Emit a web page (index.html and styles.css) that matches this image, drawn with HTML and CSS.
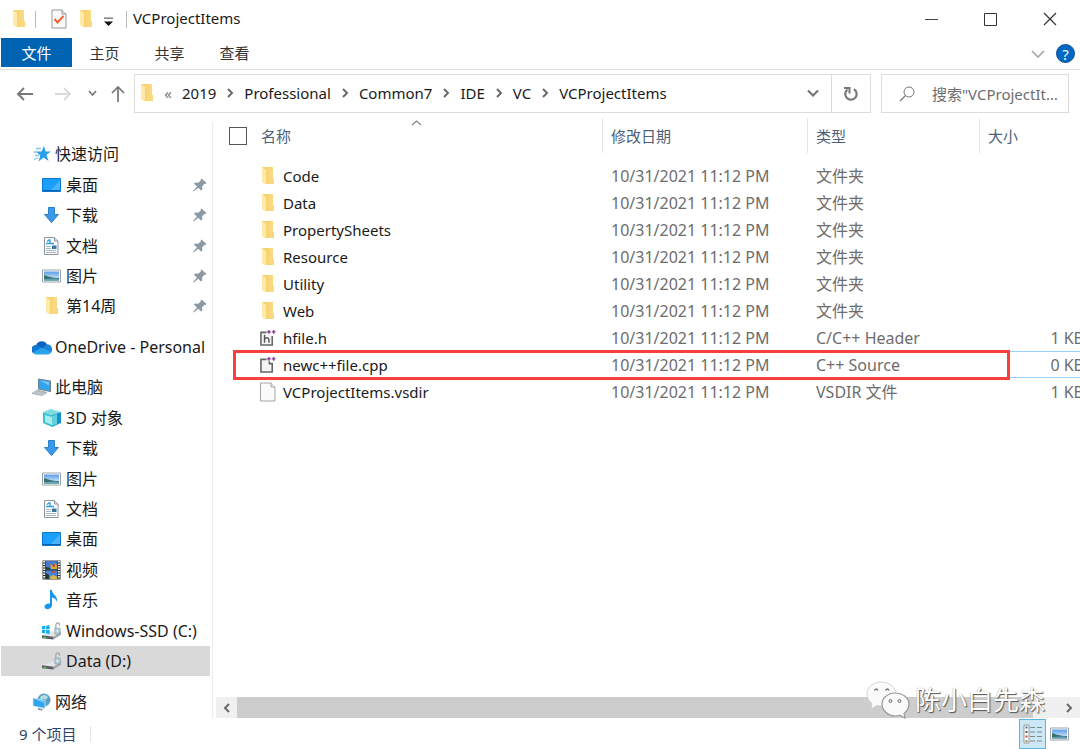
FILE: index.html
```html
<!DOCTYPE html>
<html lang="zh-CN">
<head>
<meta charset="utf-8">
<title>VCProjectItems</title>
<link rel="stylesheet" href="styles.css">
</head>
<body>
<svg class="defs" aria-hidden="true">
  <defs>
    <linearGradient id="gFolder" x1="0" x2="1"><stop offset="0" stop-color="#f3cd6b"/><stop offset="1" stop-color="#fbdc85"/></linearGradient>
    <linearGradient id="gSky" x1="0" y1="0" x2="0" y2="1"><stop offset="0" stop-color="#5b9ee8"/><stop offset="1" stop-color="#e4f3fc"/></linearGradient>
  </defs>
  <symbol id="folder" viewBox="0 0 14 20">
    <path d="M1 1h11v11h1v6H4z" fill="url(#gFolder)"/>
    <path d="M12 12h1v6H5l6-1z" fill="#f9d97f"/>
    <path d="M1 1l4 3v15l-4-3z" fill="#ffe9a6"/>
  </symbol>
  <symbol id="star" viewBox="0 0 20 18">
    <path d="M12 1l1.600 5.400h5.400l-4.500 3.400 2 6.200-5-3.500-5 4 1.800-6-4.300-4.100h5.500z" fill="#2b9fe8"/>
    <path d="M4 3.500h5M1.500 7h4M3 10.500h4M2 14.500l4-1.500" stroke="#7cc8f5" stroke-width="1.300"/>
  </symbol>
  <symbol id="desktop" viewBox="0 0 20 18">
    <path d="M.5 2.500h18v13H.5z" fill="#1a9fff" stroke="#0b78d0"/>
    <path d="M9 14L18 4v10z" fill="#48b3ff"/><path d="M1 14.500h17" stroke="#0860a8"/>
  </symbol>
  <symbol id="down" viewBox="0 0 20 18">
    <path d="M6.500 1.500h6v7h4L9.500 16.500 2.500 8.500h4z" fill="#3b97e8" stroke="#2b80cc"/>
  </symbol>
  <symbol id="doc" viewBox="0 0 20 18">
    <path d="M2.500.5h10l3.500 3.500v13.500H2.500z" fill="#fdfdfd" stroke="#8e9499"/>
    <path d="M12.500.5v3.500H16" fill="#ddd" stroke="#8e9499"/>
    <path d="M4 6.500h8M5 4.500L7 3h1v3" stroke="#2b9be0" stroke-width="1.300" fill="none"/>
    <path d="M4 9.500h5M4 11.500h5M4 13.500h10M4 15.500h10" stroke="#a5b7c5"/>
    <path d="M10 8.500h4.500v3.500H10z" fill="#39759c"/>
  </symbol>
  <symbol id="picture" viewBox="0 0 20 18">
    <path d="M.5 3h18v12H.5z" fill="#fff" stroke="#9aa3a9"/>
    <path d="M2 4.500h15v9H2z" fill="url(#gSky)"/>
    <path d="M2 8c4 1 7 3 15 3v2.500H2z" fill="#3b716b"/><path d="M2 12c6 0 10-1 15 0v1.500H2z" fill="#5f9fb8"/>
  </symbol>
  <symbol id="cloud" viewBox="1 0 20 15">
    <path d="M5 6a6 6 0 0 1 11-1l-4 9H4a4 4 0 0 1 1-8z" fill="#0f63bb"/>
    <path d="M15 5a5 5 0 0 1 6 6c0 2-2 3-4 3H9z" fill="#1a86dc"/>
    <path d="M2 12l9-4 9 5c-1 1.500-2 2-4 2H5c-2 0-3-1.500-3-3z" fill="#29a4ec"/>
    <path d="M4.500 5.500C1 6 0 10 2 13l9-5z" fill="#1279d0"/>
  </symbol>
  <symbol id="pc" viewBox="0 0 20 18">
    <path d="M6.500 1l12 2v10.500l-12-2.500z" fill="#31a4f0" stroke="#6f7f8b"/>
    <path d="M8 2.500l9 5V4z" fill="#75c8fb"/>
    <path d="M5 12l10 2.500-5 3-10-2z" fill="#d5d9dc" stroke="#8e979d" stroke-width=".7"/>
    <path d="M3 14.500l8 1.500M5 13.200l8 1.700" stroke="#a3abb0" stroke-width=".8"/>
  </symbol>
  <symbol id="cube" viewBox="0 0 20 18">
    <path d="M1 3l9 3v12l-9-4z" fill="#3bc3cf"/><path d="M3 6l7 2v8l-7-3z" fill="#a5ecec"/>
    <path d="M1 3l8-3 10 3-9 3z" fill="#7edde3"/>
    <path d="M10 6l9-3v11l-9 4z" fill="#1195c9"/><path d="M10 7l5-2v10l-5 2z" fill="#64d0df"/>
  </symbol>
  <symbol id="video" viewBox="0 0 20 20">
    <path d="M.5.5h18v19H.5z" fill="#303030"/>
    <path d="M4 1h11v8.500H4z" fill="#4179d5"/><path d="M4 10.500h11V19H4z" fill="#4882db"/>
    <path d="M2.200 1v18M16.800 1v18" stroke="#f4f4f4" stroke-width="2" stroke-dasharray="1.500 1"/>
    <path d="M8 3l2 3 2-3 3 2v4H9z" fill="#d9aa30"/><path d="M11 4h2v3h-2z" fill="#d73f34"/>
    <path d="M4 7l4 1v1.500H4zM4 13l3 2v4H4z" fill="#203a28"/>
    <path d="M8 17l3-2 4 2v2H9z" fill="#e3ba33"/><path d="M9 11h4l-1 2h-2z" fill="#c64a34"/>
  </symbol>
  <symbol id="music" viewBox="0 0 20 20">
    <path d="M8 0h2c0 5 6 5 5 12-1-3-3-4-5-4.500V15c0 5-8 5.500-7.500 1.500C3 14 6 13 8 13.500z" fill="#1696ed"/>
  </symbol>
  <symbol id="drive" viewBox="0 0 21 20">
    <path d="M0 14.500l11-4h9l-8 5.500z" fill="#e3e5e6"/>
    <path d="M12 16l8-5.500v3.500l-8 5z" fill="#a3a7aa"/><path d="M0 14.500l12 1.500v3L0 17.500z" fill="#585c5f"/>
    <path d="M1.500 16.500l3 .4" stroke="#48ca51" stroke-width="1.300"/>
    <path d="M14.500 7V4.500c0-4 4-4 4 0" fill="none" stroke="#9eabb3" stroke-width="1.300"/>
    <path d="M13.500 7h5.500v6h-5.500z" fill="#b6d0dc" stroke="#8499a5" stroke-width=".7"/><path d="M16.200 9v2" stroke="#fff"/>
  </symbol>
  <symbol id="windrive" viewBox="0 0 21 20">
    <use href="#drive"/>
    <path d="M0 5l3.500-.5v3.700H0zm4.300-.6L8 4v4.200H4.300zM0 9h3.500v3.700L0 12.200zm4.300 0H8v4.200l-3.700-.5z" fill="#0faef0"/>
  </symbol>
  <symbol id="network" viewBox="0 0 20 18">
    <circle cx="12" cy="7" r="6.500" fill="#5b9fc2"/><path d="M8 4q5-4 8 0-2 4-4 2t-2 4z" fill="#b5dde8"/>
    <path d="M1 5l12 2.500v8L1 13z" fill="#2ca5f3" stroke="#e0edf4" stroke-width=".8"/>
    <path d="M2 6l10 4V8z" fill="#79c9fb"/><path d="M6 15l5 1-1 1.500-4-.5z" fill="#8798a3"/>
  </symbol>
  <symbol id="pin" viewBox="0 0 14 14">
    <path d="M8.500.5l5 4.500-1 1-1-.2-2.500 2.700.4 3-1.400 1L5.300 9.800.7 13.500 0 13l4-4.500L1 5.800l1-1.300 3.200.3L8 2.300l-.4-1z" fill="#8b99a4"/>
  </symbol>
  <symbol id="chev" viewBox="0 0 8 10"><path d="M2 1l4 4-4 4" fill="none" stroke="#666" stroke-width="1.900"/></symbol>
  <symbol id="hfile" viewBox="1 0 17 18">
    <path d="M8 3H2v13.500h12V7" fill="#f5f5f5" stroke="#666" stroke-width="1.700"/>
    <path d="M5.800 5.500V14M5.800 10.500q1-1.800 2.500-1.800t2.200 1.800V14" fill="none" stroke="#555" stroke-width="1.500"/>
    <path d="M8.500 2.500h4M10.500.5v4M13.500 2.500h4M15.500.5v4" stroke="#8a3a98" stroke-width="1.500"/>
  </symbol>
  <symbol id="cppfile" viewBox="1 0 17 18">
    <path d="M8 3H2v13.500h12V7.500h-3V5" fill="#f5f5f5" stroke="#666" stroke-width="1.700"/>
    <path d="M8.500 2.500h4M10.500.5v4M13.500 2.500h4M15.500.5v4" stroke="#8a3a98" stroke-width="1.500"/>
  </symbol>
  <symbol id="blank" viewBox="0 0 16 20">
    <path d="M.5 1h10.500l4 4v14H.5z" fill="#fafafa" stroke="#a5a5a5"/><path d="M11 1v4h4" fill="#eee" stroke="#a5a5a5"/>
  </symbol>
</svg>

<div class="window">
  <header class="titlebar">
    <svg class="ic-folder"><use href="#folder"/></svg>
    <span class="rule rule-a"></span>
    <button class="plain prop" aria-label="属性"><svg class="ic-prop" viewBox="0 0 16 20"><path d="M1 1h10l4 4v14H1z" fill="#fafafa" stroke="#999"/><path d="M11 1v4h4" fill="#e5e5e5" stroke="#999"/><path d="M3.500 10l3 3.500 6-6.500" fill="none" stroke="#ee6330" stroke-width="2"/></svg></button>
    <button class="plain newf" aria-label="新建文件夹"><svg class="ic-folder"><use href="#folder"/></svg></button>
    <button class="plain more" aria-label="自定义"><svg class="ic-more" viewBox="0 0 8 8"><path d="M0 1h8" stroke="#555"/><path d="M0 4h8L4 8z" fill="#111"/></svg></button>
    <span class="rule rule-b"></span>
    <h1 class="title">VCProjectItems</h1>
    <div class="controls">
      <button class="plain" aria-label="最小化"><svg viewBox="0 0 14 14"><path d="M0 7.500h13" stroke="#444"/></svg></button>
      <button class="plain" aria-label="最大化"><svg viewBox="0 0 14 14"><path d="M.5 1.500h12v12H.5z" fill="none" stroke="#333"/></svg></button>
      <button class="plain" aria-label="关闭"><svg viewBox="0 0 14 14"><path d="M1 1l12 12M13 1L1 13" stroke="#333" stroke-width="1.200"/></svg></button>
    </div>
  </header>

  <nav class="ribbon">
    <button class="tab active">文件</button>
    <button class="tab">主页</button>
    <button class="tab">共享</button>
    <button class="tab">查看</button>
    <div class="ribbon-end">
      <button class="plain" aria-label="展开功能区"><svg class="ic-expand" viewBox="0 0 14 8"><path d="M1 1l6 6 6-6" fill="none" stroke="#a5a5a5" stroke-width="1.600"/></svg></button>
      <button class="help" aria-label="帮助">?</button>
    </div>
  </nav>

  <div class="addressbar">
    <div class="history">
      <button class="plain" aria-label="返回"><svg class="ic-nav" viewBox="0 0 18 18"><path d="M17 9H2M8 3L2 9l6 6" fill="none" stroke="#777" stroke-width="1.900"/></svg></button>
      <button class="plain forward" aria-label="前进"><svg class="ic-nav" viewBox="0 0 18 18"><path d="M1 9h15M10 3l6 6-6 6" fill="none" stroke="#dadada" stroke-width="1.900"/></svg></button>
      <button class="plain recent" aria-label="最近位置"><svg class="ic-recent" viewBox="0 0 9 7"><path d="M1 1l3.500 4L8 1" fill="none" stroke="#777" stroke-width="1.700"/></svg></button>
      <button class="plain" aria-label="上移"><svg class="ic-nav" viewBox="0 0 18 18"><path d="M9 17V2M3 8l6-6 6 6" fill="none" stroke="#777" stroke-width="1.700"/></svg></button>
    </div>
    <div class="path">
      <svg class="ic-folder"><use href="#folder"/></svg>
      <span class="back">«</span>
      <a href="#">2019</a><svg class="ic-chev"><use href="#chev"/></svg>
      <a href="#">Professional</a><svg class="ic-chev"><use href="#chev"/></svg>
      <a href="#">Common7</a><svg class="ic-chev"><use href="#chev"/></svg>
      <a href="#">IDE</a><svg class="ic-chev"><use href="#chev"/></svg>
      <a href="#">VC</a><svg class="ic-chev"><use href="#chev"/></svg>
      <a href="#">VCProjectItems</a>
      <button class="plain drop" aria-label="以前的位置"><svg class="ic-drop" viewBox="0 0 12 8"><path d="M1 1.500l5 5 5-5" fill="none" stroke="#777" stroke-width="2.200"/></svg></button>
      <button class="plain refresh" aria-label="刷新"><svg class="ic-refresh" viewBox="0 0 16 16"><path d="M11 3.200a5.700 5.700 0 1 1-6.500.3" fill="none" stroke="#777" stroke-width="2.200"/><path d="M1 2h5.500v5.500" fill="none" stroke="#777" stroke-width="2"/></svg></button>
    </div>
    <label class="search">
      <svg class="ic-search" viewBox="0 0 16 16"><circle cx="10" cy="6" r="5" fill="none" stroke="#777"/><path d="M6.500 9.500L1 15" stroke="#777" stroke-width="1.200"/></svg>
      <input type="text" aria-label="搜索" placeholder="搜索&quot;VCProjectItems&quot;">
    </label>
  </div>

  <div class="body">
    <aside class="sidebar">
      <a class="item top" href="#"><svg><use href="#star"/></svg>快速访问</a>
      <a class="item" href="#"><svg><use href="#desktop"/></svg>桌面<svg class="pin"><use href="#pin"/></svg></a>
      <a class="item" href="#"><svg><use href="#down"/></svg>下载<svg class="pin"><use href="#pin"/></svg></a>
      <a class="item" href="#"><svg><use href="#doc"/></svg>文档<svg class="pin"><use href="#pin"/></svg></a>
      <a class="item" href="#"><svg><use href="#picture"/></svg>图片<svg class="pin"><use href="#pin"/></svg></a>
      <a class="item" href="#"><svg><use href="#folder"/></svg>第14周<svg class="pin"><use href="#pin"/></svg></a>
      <a class="item top gap" href="#"><svg><use href="#cloud"/></svg>OneDrive - Personal</a>
      <a class="item top gap" href="#"><svg><use href="#pc"/></svg>此电脑</a>
      <a class="item" href="#"><svg><use href="#cube"/></svg>3D 对象</a>
      <a class="item" href="#"><svg><use href="#down"/></svg>下载</a>
      <a class="item" href="#"><svg><use href="#picture"/></svg>图片</a>
      <a class="item" href="#"><svg><use href="#doc"/></svg>文档</a>
      <a class="item" href="#"><svg><use href="#desktop"/></svg>桌面</a>
      <a class="item" href="#"><svg><use href="#video"/></svg>视频</a>
      <a class="item" href="#"><svg><use href="#music"/></svg>音乐</a>
      <a class="item" href="#"><svg><use href="#windrive"/></svg>Windows-SSD (C:)</a>
      <a class="item selected" href="#"><svg><use href="#drive"/></svg>Data (D:)</a>
      <a class="item top gap" href="#"><svg><use href="#network"/></svg>网络</a>
    </aside>

    <main class="content">
      <div class="listing">
        <table class="files">
          <colgroup><col><col class="c-date"><col class="c-type"><col class="c-size"></colgroup>
          <thead>
            <tr>
              <th><div class="head"><input type="checkbox" id="all" class="check"><label for="all">名称</label><svg class="sort" viewBox="0 0 11 6"><path d="M1 5l4.500-4L10 5" fill="none" stroke="#888" stroke-width="1.200"/></svg></div></th>
              <th><div class="head">修改日期</div></th>
              <th><div class="head">类型</div></th>
              <th><div class="head">大小</div></th>
            </tr>
          </thead>
          <tbody>
            <tr><td><span class="name"><svg><use href="#folder"/></svg>Code</span></td><td>10/31/2021 11:12 PM</td><td>文件夹</td><td></td></tr>
            <tr><td><span class="name"><svg><use href="#folder"/></svg>Data</span></td><td>10/31/2021 11:12 PM</td><td>文件夹</td><td></td></tr>
            <tr><td><span class="name"><svg><use href="#folder"/></svg>PropertySheets</span></td><td>10/31/2021 11:12 PM</td><td>文件夹</td><td></td></tr>
            <tr><td><span class="name"><svg><use href="#folder"/></svg>Resource</span></td><td>10/31/2021 11:12 PM</td><td>文件夹</td><td></td></tr>
            <tr><td><span class="name"><svg><use href="#folder"/></svg>Utility</span></td><td>10/31/2021 11:12 PM</td><td>文件夹</td><td></td></tr>
            <tr><td><span class="name"><svg><use href="#folder"/></svg>Web</span></td><td>10/31/2021 11:12 PM</td><td>文件夹</td><td></td></tr>
            <tr><td><span class="name"><svg><use href="#hfile"/></svg>hfile.h</span></td><td>10/31/2021 11:12 PM</td><td>C/C++ Header</td><td>1 KB</td></tr>
            <tr class="marked"><td><span class="name"><svg><use href="#cppfile"/></svg>newc++file.cpp</span><span class="highlight"></span></td><td>10/31/2021 11:12 PM</td><td>C++ Source</td><td>0 KB</td></tr>
            <tr><td><span class="name"><svg><use href="#blank"/></svg>VCProjectItems.vsdir</span></td><td>10/31/2021 11:12 PM</td><td>VSDIR 文件</td><td>1 KB</td></tr>
          </tbody>
        </table>
      </div>
      <div class="scrollbar">
        <button class="plain" aria-label="向左滚动"><svg class="ic-chev flip"><use href="#chev"/></svg></button>
        <span class="thumb"></span>
        <button class="plain right" aria-label="向右滚动"><svg class="ic-chev"><use href="#chev"/></svg></button>
      </div>
    </main>
  </div>

  <footer class="status">
    <span class="count">9 个项目</span>
    <div class="views">
      <button class="view on" aria-label="详细信息"><svg viewBox="0 0 20 20"><path d="M1 1h5v18H1z" fill="#fff" stroke="#999"/><path d="M7 3.500h5M14 3.500h5M7 8h5M14 8h5M7 12.500h5M14 12.500h5M7 17h5M14 17h5" stroke="#7c898f"/><path d="M2.500 3.500h2" stroke="#3671b5" stroke-width="2"/><path d="M2.500 8h2" stroke="#555" stroke-width="2"/><path d="M2.500 12.500h2" stroke="#d83a2c" stroke-width="2"/><path d="M2.500 17h2" stroke="#9a9c50" stroke-width="2"/></svg></button>
      <button class="view" aria-label="大图标"><svg><use href="#picture"/></svg></button>
    </div>
  </footer>

  <div class="watermark">
    <svg viewBox="0 0 44 38"><path d="M15 1C7 1 1 6.500 1 13c0 4 2 7 5 9.500L5 28l6-3.500c1.500.3 3 .5 5 .5C23 25 30 20 30 13S23 1 15 1z" fill="#fafafa" stroke="#ccc" stroke-width=".8"/><path d="M8.500 9.500q2-3 3.500 0M19.500 9.500q2-3 3.500 0" fill="none" stroke="#777" stroke-width="1.500"/><path d="M29 12c-7 0-13 5-13 11s6 12 13 12c2 0 3-.3 4.500-.8L39 37l-1-4.500c3-2.500 5-5.500 5-9.500 0-6-6-11-14-11z" fill="#fafafa" stroke="#999" stroke-width="1.200"/><circle cx="24.500" cy="20" r="1.500" fill="#ddd" stroke="#777"/><circle cx="33.500" cy="20" r="1.500" fill="#ddd" stroke="#777"/></svg>
    <span>陈小白先森</span>
  </div>
</div>
</body>
</html>
```
FILE: styles.css
```css
* { box-sizing: border-box; }

body {
  margin: 0;
  background: #fff;
  color: #1a1a1a;
  font: 15px/24px "Noto Sans", "Noto Sans CJK SC", sans-serif;
}

button, input { font: inherit; color: inherit; }
svg { display: block; flex: none; }
a { color: inherit; text-decoration: none; }
.defs { position: absolute; width: 0; height: 0; }

.window {
  position: relative;
  display: flex;
  flex-direction: column;
  min-height: 100vh;
  overflow: hidden;
}

.plain {
  display: flex;
  align-items: center;
  justify-content: center;
  padding: 0;
  border: 0;
  background: none;
}

.ic-folder { width: 14px; height: 20px; }
.ic-chev { width: 8px; height: 10px; }

/* Title bar */
.titlebar { display: flex; align-items: center; height: 38px; padding: 0 1px 0 12px; }
.rule { width: 1px; height: 17px; background: #bbb; }
.rule-a { margin: 0 15px 0 9px; }
.rule-b { margin: 0 6px 0 13px; }
.ic-prop { width: 16px; height: 20px; }
.newf { margin-left: 12px; }
.more { margin-left: 11px; padding-top: 4px; }
.ic-more { width: 9px; height: 9px; }
.title { margin: 0; padding-bottom: 2px; font-size: 15px; font-weight: 400; }
.controls { display: flex; margin-left: auto; }
.controls .plain { width: 59px; height: 38px; }
.controls svg { width: 14px; height: 14px; }

/* Ribbon */
.ribbon { display: flex; height: 32px; padding-left: 1px; border-bottom: 1px solid #e0e0e0; }
.tab { width: 65px; height: 29px; padding: 0; border: 0; background: none; color: #333; }
.tab.active { width: 71px; background: #0063b1; color: #fff; }
.ribbon-end { display: flex; align-items: center; gap: 11px; margin-left: auto; padding-right: 5px; }
.ic-expand { width: 14px; height: 8px; }
.help {
  width: 19px;
  height: 19px;
  padding: 0;
  border: 1px solid #0a4d94;
  border-radius: 50%;
  background: #0067c5;
  color: #fff;
  line-height: 16px;
}

/* Address bar */
.addressbar { display: flex; padding: 4px 11px 4px 16px; }
.history { display: flex; align-items: center; width: 118px; }
.ic-nav { width: 18px; height: 18px; }
.forward { margin-left: 20px; }
.ic-recent { width: 9px; height: 7px; }
.recent { margin: 0 12px 0 16px; }
.path {
  display: flex;
  flex: 1;
  align-items: center;
  gap: 10px;
  height: 39px;
  padding: 0 0 2px 5px;
  border: 1px solid #dcdcdc;
}
.path .refresh { height: 37px; margin: 0 0 -2px 2px; border-left: 1px solid #dcdcdc; }
.back { width: 8px; text-align: center; color: #777; }
.ic-drop { width: 12px; height: 8px; }
.drop { margin-left: auto; }
.refresh { width: 39px; }
.ic-refresh { width: 16px; height: 16px; }
.search {
  display: flex;
  align-items: center;
  width: 188px;
  margin-left: 10px;
  padding: 0 7px 0 17px;
  gap: 17px;
  border: 1px solid #dcdcdc;
}
.ic-search { width: 16px; height: 16px; }
.search input {
  width: 100%;
  min-width: 0;
  padding: 0;
  border: 0;
  outline: 0;
  background: none;
  text-overflow: ellipsis;
}
.search input::placeholder { color: #6d6d6d; }

/* Body */
.body { display: flex; flex: 1; }

.sidebar {
  display: flex;
  flex-direction: column;
  width: 213px;
  margin-top: 5px;
  padding: 17px 2px 1px 1px;
  border-right: 1px solid #ececec;
  font-size: 16px;
}
.item {
  display: flex;
  flex: 1 1 28px;
  align-items: center;
  gap: 4px;
  padding: 0 3px 0 41px;
  white-space: nowrap;
}
.item svg { width: 20px; height: 20px; }
.item.top { gap: 3px; padding-left: 31px; }
.item.gap { margin-top: 10px; }
.item.selected { background: #d9d9d9; }
.item .pin { width: 14px; height: 14px; margin-left: auto; }

.content { display: flex; flex: 1; flex-direction: column; min-width: 0; padding-left: 3px; }
.listing { flex: 1; padding: 1px 0 0 13px; overflow: hidden; }

.files { width: calc(100% + 8px); table-layout: fixed; border-collapse: collapse; }
.c-date { width: 205px; }
.c-type { width: 172px; }
.c-size { width: 109px; }
.files th { padding: 0 0 9px; font-weight: 400; text-align: left; color: #4c607a; }
.head {
  position: relative;
  display: flex;
  align-items: center;
  height: 35px;
  padding-left: 8px;
  border-left: 1px solid #e5e5e5;
}
th:first-child .head { gap: 14px; padding: 0; border: 0; }
.check {
  appearance: none;
  width: 18px;
  height: 18px;
  margin: 0;
  border: 1px solid #555;
  background: #fff;
}
.sort { position: absolute; top: 2px; left: 50%; width: 11px; height: 6px; margin-left: -5px; }
.files td { height: 27px; padding: 0 0 0 9px; color: #6d6d6d; font-size: 16px; white-space: nowrap; }
.files td:first-child { padding-left: 31px; color: #1a1a1a; font-size: 15px; }
.files td:last-child { padding-right: 4px; text-align: right; }
.name { display: flex; align-items: center; gap: 7px; }
.name svg { width: 16px; height: 20px; }
.marked { position: relative; }
.marked td:last-child { box-shadow: inset 0 1px 0 0 #99d1ff, inset 0 -1px 0 0 #99d1ff; }
.highlight {
  position: absolute;
  inset: -1px 78px -2px 4px;
  border: 3px solid #f93e3e;
}

.scrollbar { display: flex; height: 21px; background: #f0f0f0; }
.scrollbar .plain { width: 21px; }
.scrollbar .right { width: 23px; }
.flip { transform: rotate(180deg); }
.thumb { flex: 1; margin-right: 24px; background: #cdcdcd; }

/* Status bar */
.status { display: flex; align-items: center; height: 31px; padding: 0 7px 0 19px; color: #2d4566; }
.count { padding-right: 14px; border-right: 1px solid #e5e5e5; line-height: 16px; }
.views { display: flex; margin-left: auto; }
.view {
  display: flex;
  align-items: center;
  justify-content: center;
  width: 27px;
  height: 30px;
  padding: 0;
  border: 1px solid transparent;
  background: none;
}
.view.on { border-color: #5bb5e0; background: #cce8f6; }
.view svg { width: 20px; height: 20px; }

.watermark {
  position: absolute;
  right: 35px;
  bottom: 30px;
  display: flex;
  align-items: center;
  gap: 5px;
  color: #fff;
  font-size: 26px;
  line-height: 38px;
  text-shadow: 1px 1px 1px #555, 0 0 1px #888;
}
.watermark svg { width: 44px; height: 38px; }
```
